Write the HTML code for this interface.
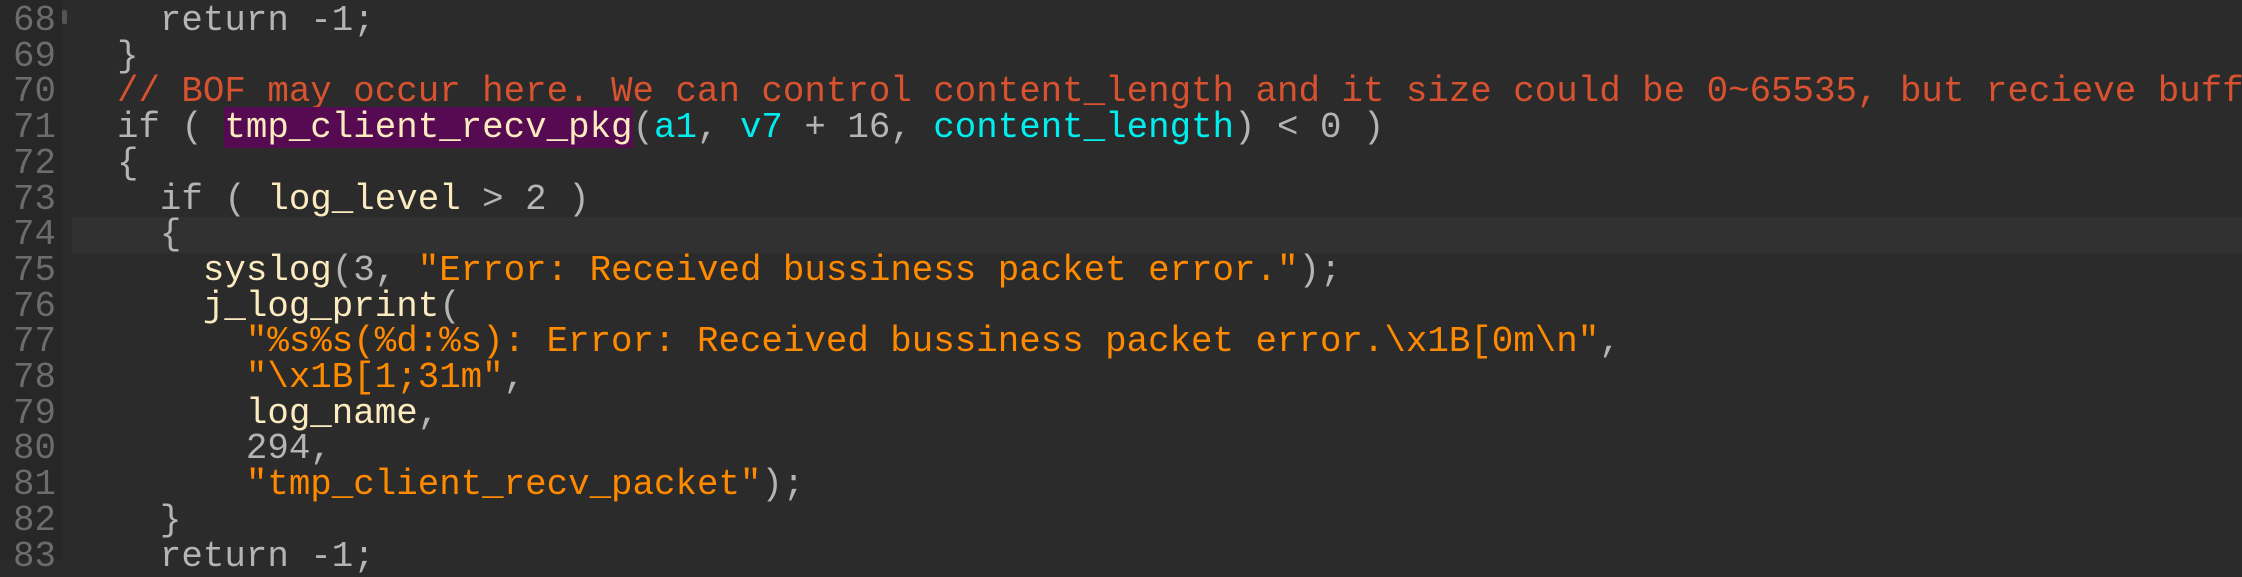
<!DOCTYPE html>
<html><head><meta charset="utf-8"><style>
html,body{margin:0;padding:0;}
body{width:2242px;height:560px;background:#2b2b2b;overflow:hidden;position:relative;font-family:"Liberation Mono",monospace;font-size:35.8px;}
.gut{position:absolute;left:0;top:0;width:62px;height:560px;background:#272727;}
.hl{position:absolute;left:72px;top:217px;width:2170px;height:36px;background:#313131;}
.mark{position:absolute;left:62px;top:10px;width:5px;height:14px;background:#555;border-radius:2px;}
.ln{position:absolute;left:0;width:56px;text-align:right;color:#6c6c6c;line-height:35.7px;}
.code{position:absolute;left:74px;top:3px;white-space:pre;line-height:35.7px;color:#b4b4b4;}
.c{color:#d9522f}.s{color:#ff8a00}.y{color:#fbebbf}.k{color:#00eeee}.p{background:#560a52;color:#fbebbf}
</style></head><body>
<div class="gut"></div><div class="hl"></div><div class="mark"></div>
<div class="ln" style="top:3px">68<br>69<br>70<br>71<br>72<br>73<br>74<br>75<br>76<br>77<br>78<br>79<br>80<br>81<br>82<br>83</div>
<div class="code">    return -1;
  }
  <span class="c">// BOF may occur here. We can control content_length and it size could be 0~65535, but recieve buffer</span>
  if ( <span class="p">tmp_client_recv_pkg</span>(<span class="k">a1</span>, <span class="k">v7</span> + 16, <span class="k">content_length</span>) &lt; 0 )
  {
    if ( <span class="y">log_level</span> &gt; 2 )
    {
      <span class="y">syslog</span>(3, <span class="s">"Error: Received bussiness packet error."</span>);
      <span class="y">j_log_print</span>(
        <span class="s">"%s%s(%d:%s): Error: Received bussiness packet error.\x1B[0m\n"</span>,
        <span class="s">"\x1B[1;31m"</span>,
        <span class="y">log_name</span>,
        294,
        <span class="s">"tmp_client_recv_packet"</span>);
    }
    return -1;</div>
</body></html>
